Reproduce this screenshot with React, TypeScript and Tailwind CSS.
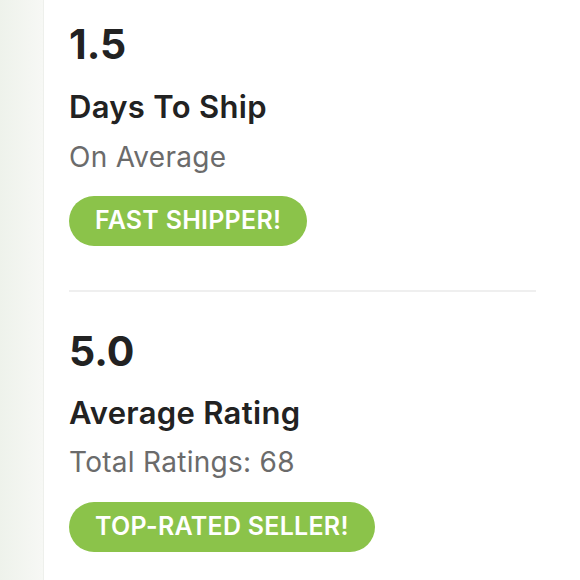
export default function App() {
  const font = { fontFamily: "Inter, 'Noto Sans', sans-serif" }
  return (
    <div className="flex min-h-[580px] w-[580px] bg-white" style={font}>
      <div className="w-[44px] shrink-0 bg-gradient-to-r from-[#eef2eb] to-[#f7f8f5] border-r border-[#eef0ec]" />
      <div className="flex-1 pl-[25px] pr-[44px] pt-[24px]">
        <section className="flex flex-col items-start">
          <div className="text-[41px] font-bold leading-none text-[#222]">1.5</div>
          <div className="mt-[26px] text-[31px] font-semibold leading-none tracking-[0.01em] text-[#222]">Days To Ship</div>
          <div className="mt-[21px] text-[28px] leading-none tracking-[0.01em] text-[#6b6b6b]">On Average</div>
          <div className="mt-[25px] flex h-[50px] items-center rounded-full bg-[#8bc34a] px-[26px] text-[25px] font-semibold tracking-[0.01em] text-white">
            FAST SHIPPER!
          </div>
        </section>
        <div className="mt-[44px] h-[2px] bg-[#efefef]" />
        <section className="mt-[39px] flex flex-col items-start">
          <div className="text-[41px] font-bold leading-none text-[#222]">5.0</div>
          <div className="mt-[25px] text-[31px] font-semibold leading-none tracking-[0.01em] text-[#222]">Average Rating</div>
          <div className="mt-[20px] text-[28px] leading-none tracking-[0.01em] text-[#6b6b6b]">Total Ratings: 68</div>
          <div className="mt-[26px] flex h-[50px] items-center rounded-full bg-[#8bc34a] px-[26px] text-[25px] font-semibold tracking-[0.01em] text-white">
            TOP-RATED SELLER!
          </div>
        </section>
      </div>
    </div>
  )
}
